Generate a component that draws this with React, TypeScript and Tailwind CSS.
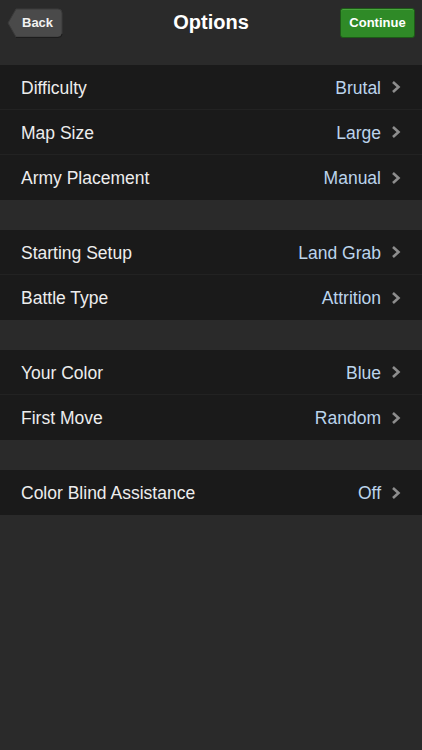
import React from "react"

type Row = { label: string; value: string }

const groups: Row[][] = [
  [
    { label: "Difficulty", value: "Brutal" },
    { label: "Map Size", value: "Large" },
    { label: "Army Placement", value: "Manual" },
  ],
  [
    { label: "Starting Setup", value: "Land Grab" },
    { label: "Battle Type", value: "Attrition" },
  ],
  [
    { label: "Your Color", value: "Blue" },
    { label: "First Move", value: "Random" },
  ],
  [{ label: "Color Blind Assistance", value: "Off" }],
]

const Chevron = () => (
  <svg width="10" height="14" viewBox="0 0 10 14" className="ml-[10px] mt-[-2px]">
    <path d="M2 2 L7.5 7 L2 12" fill="none" stroke="#8d8d8d" strokeWidth="2.6" strokeLinejoin="miter" />
  </svg>
)

const BackButton = () => (
  <div className="relative w-[56px] h-[31px]">
    <svg width="56" height="31" viewBox="0 0 56 31" className="absolute inset-0">
      <path
        d="M9 1 H51 Q55 1 55 5 V25 Q55 29 51 29 H9 L1 15 Z"
        fill="#4a4a4a"
        stroke="#3a3a3a"
        strokeWidth="1"
      />
      <path d="M9 29.5 H51 Q55 29.5 55 26" fill="none" stroke="#1c1c1c" strokeWidth="1" />
    </svg>
    <span className="relative flex h-[29px] items-center pl-[15px] text-[13px] font-bold text-[#f2f2f2]">Back</span>
  </div>
)

const SettingsRow = ({ row, last }: { row: Row; last: boolean }) => (
  <div className={`flex h-[45px] items-center pl-[21px] pr-[21px] pt-[2px] ${last ? "" : "border-b border-[#222222]"}`}>
    <span className="flex-1 text-[17.5px] text-[#ededed]">{row.label}</span>
    <span className="text-[17.5px] text-[#bcd4ec]">{row.value}</span>
    <Chevron />
  </div>
)

export default function App() {
  return (
    <div
      className="min-h-[750px] w-full bg-[#2a2a2a]"
      style={{ fontFamily: '"Liberation Sans", Arial, sans-serif' }}
    >
      <div className="flex h-[65px] items-start px-[7px] pt-[8px]">
        <div className="w-[75px]">
          <BackButton />
        </div>
        <h1 className="flex-1 text-center text-[20px] leading-[28px] font-bold text-white">Options</h1>
        <button className="h-[30px] w-[75px] rounded-[3px] border border-[#1d5a17] bg-[#2f8a27] text-[13px] font-bold text-white shadow-[inset_0_1px_0_#4aa63f]">
          Continue
        </button>
      </div>
      <div className="flex flex-col gap-[30px]">
        {groups.map((g, i) => (
          <div key={i} className="bg-[#1a1a1a]">
            {g.map((row, j) => (
              <SettingsRow key={row.label} row={row} last={j === g.length - 1} />
            ))}
          </div>
        ))}
      </div>
    </div>
  )
}
